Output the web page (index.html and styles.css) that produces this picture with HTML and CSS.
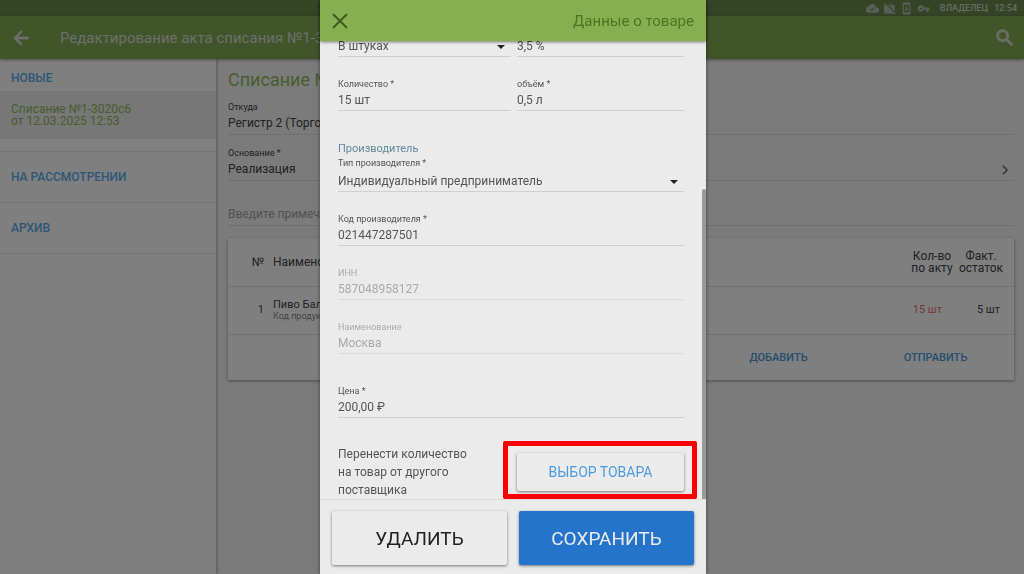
FILE: index.html
```
<!DOCTYPE html>
<html lang="ru">
<head>
  <meta charset="UTF-8" />
  <meta name="viewport" content="width=device-width, initial-scale=1.0"/>
  <title>Редактирование акта списания</title>
  <link rel="stylesheet" href="styles.css">
</head>
<body>
  <div class="status-bar">
    <svg class="status-icon" viewBox="0 0 24 24"><path d="M19.400 10A7.500 7.500 0 0 0 5.300 8 6 6 0 0 0 6 20h13a5 5 0 0 0 .4-10zM10 17l-3.500-3.500 1.400-1.400 2.100 2.100 5.200-5.200 1.400 1.400z"/></svg>
    <svg class="status-icon" viewBox="0 0 24 24"><path d="M2.300 1 1 2.300 4.700 6H2v15h17.700l2 2 1.300-1.300zM22 6h-5V3h-2v3h-4V3H7.500L22 17.500zM9 3h6v1H9z"/></svg>
    <svg class="status-icon" viewBox="0 0 24 24"><path d="M17 1H7a2 2 0 0 0-2 2v18a2 2 0 0 0 2 2h10a2 2 0 0 0 2-2V3a2 2 0 0 0-2-2zm0 18H7V5h10zm-1-6h-3V8h-2v5H8l4 4z"/></svg>
    <svg class="status-icon" viewBox="0 0 24 24"><path d="M12.700 10a6 6 0 1 0 0 4H17v4h4v-4h2v-4zM7 14a2 2 0 1 1 0-4 2 2 0 0 1 0 4z"/></svg>
    <span class="owner">ВЛАДЕЛЕЦ</span>
    <span>12:54</span>
  </div>

  <header class="app-bar">
    <button class="icon-btn" aria-label="Назад">
      <svg viewBox="0 0 24 24" width="22" height="22"><path d="M20 11H7.800l5.600-5.600L12 4l-8 8 8 8 1.400-1.400L7.800 13H20z"/></svg>
    </button>
    <h1>Редактирование акта списания №1-3020с6</h1>
    <button class="icon-btn" aria-label="Поиск">
      <svg viewBox="0 0 24 24" width="22" height="22"><path d="M15.500 14h-.8l-.3-.3a6.500 6.500 0 1 0-.7.7l.3.3v.8l5 5 1.500-1.500zm-6 0a4.500 4.500 0 1 1 0-9 4.500 4.500 0 0 1 0 9z"/></svg>
    </button>
  </header>

  <div class="layout">
    <nav class="sidebar">
      <a class="group new" href="#">НОВЫЕ</a>
      <a class="doc" href="#">Списание №1-3020с6<br>от 12.03.2025 12:53</a>
      <a class="group" href="#">НА РАССМОТРЕНИИ</a>
      <a class="group" href="#">АРХИВ</a>
    </nav>

    <main class="content">
      <h2>Списание №1-3020с6</h2>
      <div class="field act-field">
        <label for="from">Откуда</label>
        <input id="from" type="text" value="Регистр 2 (Торговый зал)">
      </div>
      <div class="field act-field">
        <label for="reason">Основание *</label>
        <input id="reason" type="text" value="Реализация">
        <svg class="chevron" viewBox="0 0 10 14" width="8" height="10"><path d="M2 1l6 6-6 6"/></svg>
      </div>
      <div class="field note-field">
        <input type="text" placeholder="Введите примечание" aria-label="Примечание">
      </div>

      <div class="card">
        <table>
          <thead>
            <tr><th class="num">№</th><th class="name">Наименование</th><th class="qty">Кол-во<br>по акту</th><th class="rest">Факт.<br>остаток</th></tr>
          </thead>
          <tbody>
            <tr>
              <td class="num">1</td>
              <td class="name">Пиво Балтика<small>Код продукции</small></td>
              <td class="qty red">15 шт</td>
              <td class="rest">5 шт</td>
            </tr>
          </tbody>
        </table>
        <div class="card-actions">
          <button>ДОБАВИТЬ</button>
          <button>ОТПРАВИТЬ</button>
        </div>
      </div>
    </main>
  </div>

  <div class="backdrop">
    <div class="modal" role="dialog" aria-labelledby="modalTitle">
      <div class="modal-header">
        <button class="icon-btn close" aria-label="Закрыть">
          <svg viewBox="0 0 16 16" width="16" height="16"><path d="M1 1l14 14M15 1L1 15"/></svg>
        </button>
        <h2 id="modalTitle">Данные о товаре</h2>
      </div>

      <form class="modal-body" id="productForm">
        <div class="form-content">
          <div class="row">
            <div class="field select">
              <select aria-label="Единица измерения"><option>В штуках</option></select>
            </div>
            <div class="field">
              <input type="text" value="3,5 %" aria-label="Крепость">
            </div>
          </div>
          <div class="row">
            <div class="field">
              <label for="count">Количество *</label>
              <input id="count" type="text" value="15 шт">
            </div>
            <div class="field">
              <label for="volume">объём *</label>
              <input id="volume" type="text" value="0,5 л">
            </div>
          </div>

          <h3>Производитель</h3>
          <div class="field select">
            <label for="makerType">Тип производителя *</label>
            <select id="makerType"><option>Индивидуальный предприниматель</option></select>
          </div>
          <div class="field">
            <label for="makerCode">Код производителя *</label>
            <input id="makerCode" type="text" value="021447287501">
          </div>
          <div class="field disabled">
            <label for="inn">ИНН</label>
            <input id="inn" type="text" value="587048958127" disabled>
          </div>
          <div class="field disabled">
            <label for="makerName">Наименование</label>
            <input id="makerName" type="text" value="Москва" disabled>
          </div>
          <div class="field price">
            <label for="price">Цена *</label>
            <input id="price" type="text" value="200,00 ₽">
          </div>

          <div class="row transfer">
            <p>Перенести количество<br>на товар от другого<br>поставщика</p>
            <div class="highlight">
              <button type="button" class="pick-btn">ВЫБОР ТОВАРА</button>
            </div>
          </div>
        </div>
        <div class="scroll-thumb"></div>
      </form>

      <div class="modal-footer">
        <button class="btn">УДАЛИТЬ</button>
        <button class="btn primary">СОХРАНИТЬ</button>
      </div>
    </div>
  </div>
</body>
</html>
```
FILE: styles.css
```
* {
  box-sizing: border-box;
}

body {
  margin: 0;
  min-height: 100vh;
  display: flex;
  flex-direction: column;
  font-family: Roboto, "Liberation Sans", sans-serif;
  font-size: 12px;
  color: #444;
  background: #f6f6f6;
}

h1, h2, h3, p {
  margin: 0;
  font-weight: normal;
}

a {
  text-decoration: none;
}

button, input, select {
  font: inherit;
  color: inherit;
  border: none;
  background: none;
  padding: 0;
  margin: 0;
}

svg {
  display: block;
  fill: currentColor;
}

/* top bars */
.status-bar {
  height: 16px;
  display: flex;
  justify-content: flex-end;
  align-items: center;
  gap: 4px;
  padding: 0 7px;
  font-size: 9px;
  font-weight: 500;
  color: #d0d4cc;
  background: #6c884c;
}

.status-icon {
  width: 13px;
  height: 13px;
  color: #b4bcac;
}

.owner {
  margin: 0 2px 0 6px;
}

.app-bar {
  height: 43px;
  display: flex;
  align-items: center;
  padding: 0 8px 0 10px;
  color: #d8dcd4;
  background: #82aa54;
  box-shadow: 0 1px 3px rgba(0, 0, 0, 0.4);
  z-index: 1;
}

.app-bar path {
  stroke: currentColor;
  stroke-width: 1;
}

.app-bar h1 {
  flex: 1;
  margin-left: 28px;
  font-size: 15px;
}

/* side menu */
.layout {
  flex: 1;
  display: flex;
}

.sidebar {
  width: 216px;
  background: #fff;
  box-shadow: 1px 0 3px rgba(0, 0, 0, 0.3);
}

.group {
  display: flex;
  align-items: center;
  height: 51px;
  padding-left: 11px;
  border-bottom: 1px solid #e8e8e8;
  font-size: 12px;
  font-weight: 500;
  color: #5cacec;
}

.group.new {
  height: 32px;
  padding-top: 6px;
  border: none;
}

.doc {
  display: block;
  height: 48px;
  padding: 12px 11px;
  margin-bottom: 12px;
  line-height: 12px;
  color: #90bc5c;
  background: #eee;
}

.doc + .group {
  height: 52px;
  border-top: 1px solid #e8e8e8;
}

/* act */
.content {
  flex: 1;
  padding: 10px 10px 0 12px;
}

.content h2 {
  margin-bottom: 9px;
  font-size: 18px;
  line-height: 22px;
  color: #90bc5c;
}

.field {
  position: relative;
  border-bottom: 1px solid #d0d0d0;
}

.field label {
  display: block;
  font-size: 9px;
  line-height: 14px;
}

.field input {
  display: block;
  width: 100%;
  height: 19px;
  padding-bottom: 1px;
}

.act-field {
  margin-bottom: 11px;
  padding-bottom: 1px;
  border-color: #e0e0e0;
}

.note-field {
  padding: 13px 0 1px;
  margin-bottom: 12px;
  border-color: #e0e0e0;
}

.note-field input::placeholder {
  color: #a4a4a4;
  opacity: 1;
}

.chevron {
  position: absolute;
  right: 5px;
  bottom: 5px;
  fill: none;
  stroke: #5c646c;
  stroke-width: 2;
}

.card {
  background: #fff;
  box-shadow: 0 1px 3px rgba(0, 0, 0, 0.4);
}

table {
  width: 100%;
  border-collapse: collapse;
}

tr {
  height: 48px;
  border-bottom: 1px solid #e4e4e4;
}

th, td {
  padding: 0;
  font-weight: normal;
  line-height: 12px;
}

td {
  font-size: 11px;
}

.num {
  width: 36px;
  text-align: right;
}

.name {
  padding-left: 9px;
  text-align: left;
}

.name small {
  display: block;
  font-size: 9px;
  line-height: 10px;
  color: #888;
}

.qty {
  width: 48px;
}

.rest {
  width: 58px;
  padding-right: 8px;
}

td.qty, td.rest {
  padding-right: 14px;
  text-align: right;
  white-space: nowrap;
}

.red {
  color: #e87070;
}

.card-actions {
  display: flex;
  justify-content: flex-end;
  height: 45px;
}

.card-actions button {
  width: 157px;
  font-size: 11px;
  font-weight: 500;
  color: #4c9cdc;
}

/* product dialog */
.backdrop {
  position: fixed;
  inset: 0;
  z-index: 10;
  display: flex;
  justify-content: center;
  padding-left: 2px;
  background: rgba(0, 0, 0, 0.5);
}

.modal {
  width: 386px;
  display: flex;
  flex-direction: column;
  color: #555;
  background: #ebebeb;
  box-shadow: 0 0 4px rgba(0, 0, 0, 0.5);
}

.modal-header {
  height: 41px;
  display: flex;
  justify-content: space-between;
  align-items: center;
  padding: 0 12px;
  color: #4c7424;
  background: #86b050;
  box-shadow: 0 1px 3px rgba(0, 0, 0, 0.5);
  z-index: 1;
}

.modal-header h2 {
  font-size: 15px;
}

.close path {
  fill: none;
  stroke: #3c5c20;
  stroke-width: 2;
}

/* content is kept at the end of the scroll area */
.modal-body {
  position: relative;
  flex: 1;
  min-height: 0;
  display: flex;
  flex-direction: column;
  justify-content: flex-end;
  padding: 0 22px 0 18px;
  overflow: hidden;
}

.form-content {
  flex-shrink: 0;
}

.form-content .field {
  margin-bottom: 20px;
}

.row {
  display: grid;
  grid-template-columns: 1fr 167px;
  align-items: end;
  gap: 6px;
}

.form-content h3 {
  margin-top: 10px;
  font-size: 11px;
  line-height: 15px;
  color: #64889c;
}

.select select {
  display: block;
  width: 100%;
  height: 21px;
  appearance: none;
}

.select::after {
  content: "";
  position: absolute;
  right: 6px;
  bottom: 7px;
  border: 4px solid transparent;
  border-top-color: #222;
  border-bottom: none;
}

.form-content .disabled {
  color: #aaa;
  border-color: #dcdcdc;
}

.disabled input {
  color: #aaa;
}

.form-content .price {
  margin: 30px 0 27px;
}

.transfer {
  align-items: center;
  line-height: 18px;
}

.highlight {
  position: relative;
}

.highlight::after {
  content: "";
  position: absolute;
  inset: -12px -13px -8px -14px;
  border: 5px solid #f00;
  border-radius: 2px;
  pointer-events: none;
}

.pick-btn {
  display: block;
  width: 100%;
  height: 38px;
  font-size: 14px;
  color: #4c9cdc;
  border-radius: 2px;
  box-shadow: 0 1px 3px rgba(0, 0, 0, 0.5);
}

.scroll-thumb {
  position: absolute;
  right: 0;
  bottom: 0;
  width: 4px;
  height: 310px;
  border-radius: 2px 2px 0 0;
  background: #999;
}

.modal-footer {
  display: flex;
  gap: 12px;
  padding: 11px 12px 9px;
  border-top: 1px solid #ddd;
}

.btn {
  flex: 1;
  height: 54px;
  font-size: 19px;
  color: #222;
  border-radius: 2px;
  box-shadow: 0 1px 3px rgba(0, 0, 0, 0.5);
}

.btn.primary {
  color: #ebebeb;
  background: #2474cc;
}
```
